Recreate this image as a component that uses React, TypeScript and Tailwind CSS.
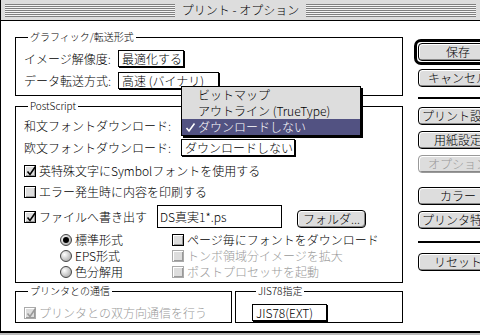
import React from 'react';

const stripes =
  'flex-1 h-[13px] bg-[repeating-linear-gradient(to_bottom,#808080_0px,#808080_1px,#f4f4f4_1px,#f4f4f4_2px)]';

function Btn({ label, disabled = false }: { label: string; disabled?: boolean }) {
  return (
    <div
      className={`flex h-[18px] w-[80px] shrink-0 items-center justify-center whitespace-nowrap rounded-[4px] border bg-[#dddddd] text-[12px] leading-none shadow-[inset_1px_1px_0_#fff,inset_-1px_-1px_0_#888] ${
        disabled ? 'border-[#999] text-[#999]' : 'border-black text-black'
      }`}
    >
      {label}
    </div>
  );
}

function Check({ checked = false, disabled = false }: { checked?: boolean; disabled?: boolean }) {
  return (
    <span
      className={`relative flex h-[12px] w-[12px] shrink-0 items-center justify-center border bg-[#dddddd] shadow-[inset_1px_1px_0_#fff,inset_-1px_-1px_0_#999] ${
        disabled ? 'border-[#aaa]' : 'border-black'
      }`}
    >
      {checked && (
        <svg width="12" height="12" viewBox="0 0 12 12" className="absolute left-[0px] top-[-1px]">
          <path
            d="M2.5 6.5 L5 9.5 L10.5 1.5"
            fill="none"
            stroke={disabled ? '#999' : '#000'}
            strokeWidth="1.6"
          />
        </svg>
      )}
    </span>
  );
}

function Radio({ on = false }: { on?: boolean }) {
  return (
    <span className="flex h-[12px] w-[12px] shrink-0 items-center justify-center rounded-full border border-[#444] bg-[radial-gradient(circle_at_35%_35%,#ffffff,#9a9a9a)]">
      {on && <span className="h-[6px] w-[6px] rounded-full bg-black" />}
    </span>
  );
}

function Popup({ label, w }: { label: string; w: string }) {
  return (
    <div
      className={`flex h-[17px] ${w} shrink-0 items-center whitespace-nowrap border border-black bg-white px-[3px] text-[12px] leading-none shadow-[1px_1px_0_#000]`}
    >
      {label}
    </div>
  );
}

function Group({
  title,
  className,
  children,
}: {
  title: string;
  className: string;
  children: React.ReactNode;
}) {
  return (
    <fieldset className={`border border-black ${className}`}>
      <legend className="ml-[4px] px-[2px] text-[10px] leading-[12px]">{title}</legend>
      {children}
    </fieldset>
  );
}

export default function App() {
  return (
    <div className="h-[335px] w-[480px] overflow-hidden bg-[#bbbbbb] font-['Noto_Sans_CJK_JP',sans-serif] font-light text-black">
      <div className="flex h-[333px] flex-col border-b-2 border-l border-black bg-white">
        {/* Title bar */}
        <div className="flex h-[21px] shrink-0 items-center border-b border-black bg-[#dddddd] px-[4px]">
          <div className={stripes} />
          <span className="px-[7px] text-[12px] leading-none whitespace-nowrap">
            プリント - オプション
          </span>
          <div className={stripes} />
        </div>

        <div className="flex">
          {/* Left column */}
          <div className="flex w-[402px] shrink-0 flex-col pl-[14px] pt-[10px]">
            <Group title="グラフィック/転送形式" className="w-[388px] px-[8px] pb-[5px] pt-[7px]">
              <div className="flex h-[18px] items-start">
                <span className="w-[94px] text-[12px] leading-[17px]">イメージ解像度:</span>
                <Popup label="最適化する" w="w-[66px]" />
              </div>
              <div className="mt-[4px] flex h-[18px] items-start">
                <span className="w-[94px] text-[12px] leading-[17px]">データ転送方式:</span>
                <Popup label="高速 (バイナリ)" w="w-[101px]" />
              </div>
            </Group>

            <Group title="PostScript" className="mt-[4px] w-[388px] px-[8px] pb-[2px] pt-[5px]">
              <div className="flex h-[18px] items-start">
                <span className="w-[157px] text-[12px] leading-[17px]">和文フォントダウンロード:</span>
                <div className="relative h-[17px] w-[114px]">
                  {/* open popup menu, drawn over its popup */}
                  <div className="absolute left-0 top-[-31px] z-10 w-[180px] border border-black bg-[#dddddd] shadow-[2px_2px_0_#000]">
                    <div className="flex h-[16px] items-center pl-[16px] text-[12px] leading-none">
                      ビットマップ
                    </div>
                    <div className="flex h-[16px] items-center pl-[16px] text-[12px] leading-none">
                      アウトライン (TrueType)
                    </div>
                    <div className="flex h-[16px] items-center bg-[#525282] text-[12px] leading-none text-white">
                      <span className="flex w-[16px] justify-center">
                        <svg width="11" height="11" viewBox="0 0 11 11">
                          <path d="M1.5 6 L4 9 L9.5 1.5" fill="none" stroke="#fff" strokeWidth="1.6" />
                        </svg>
                      </span>
                      ダウンロードしない
                    </div>
                  </div>
                </div>
              </div>
              <div className="mt-[4px] flex h-[18px] items-start">
                <span className="w-[157px] text-[12px] leading-[17px]">欧文フォントダウンロード:</span>
                <Popup label="ダウンロードしない" w="w-[114px]" />
              </div>
              <div className="mt-[4px] flex h-[20px] items-center gap-[3px] text-[12px] leading-none">
                <Check checked />
                英特殊文字にSymbolフォントを使用する
              </div>
              <div className="mt-[1px] flex h-[20px] items-center gap-[3px] text-[12px] leading-none">
                <Check />
                エラー発生時に内容を印刷する
              </div>
              <div className="mt-[3px] flex h-[23px] items-start">
                <div className="flex h-[23px] w-[133px] items-center gap-[3px] text-[12px] leading-none">
                  <Check checked />
                  ファイルへ書き出す
                </div>
                <div className="flex h-[23px] w-[125px] items-center border border-black px-[2px] text-[12px] leading-none">
                  DS真実1*.ps
                </div>
                <div className="ml-[15px] mt-[5px] flex h-[18px] w-[69px] items-center justify-center rounded-[4px] border border-black bg-[#dddddd] text-[12px] leading-none shadow-[inset_1px_1px_0_#fff,inset_-1px_-1px_0_#888]">
                  フォルダ...
                </div>
              </div>
              <div className="mt-[4px] grid grid-cols-[112px_1fr] pl-[36px] text-[12px] leading-none">
                <div className="flex h-[16px] items-center gap-[3px]">
                  <Radio on />
                  標準形式
                </div>
                <div className="flex h-[16px] items-center gap-[3px]">
                  <Check />
                  ページ毎にフォントをダウンロード
                </div>
                <div className="flex h-[16px] items-center gap-[3px]">
                  <Radio />
                  EPS形式
                </div>
                <div className="flex h-[16px] items-center gap-[3px] text-[#999]">
                  <Check disabled />
                  トンボ領域分イメージを拡大
                </div>
                <div className="flex h-[16px] items-center gap-[3px]">
                  <Radio />
                  色分解用
                </div>
                <div className="flex h-[16px] items-center gap-[3px] text-[#999]">
                  <Check disabled />
                  ポストプロセッサを起動
                </div>
              </div>
            </Group>

            <div className="mt-[2px] flex gap-[3px]">
              <Group title="プリンタとの通信" className="w-[217px] px-[8px] pb-[1px] pt-[7px]">
                <div className="flex h-[17px] items-center gap-[3px] text-[12px] leading-none text-[#999]">
                  <Check checked disabled />
                  プリンタとの双方向通信を行う
                </div>
              </Group>
              <Group title="JIS78指定" className="w-[168px] pb-[1px] pl-[16px] pt-[7px]">
                <Popup label="JIS78(EXT)" w="w-[75px]" />
              </Group>
            </div>
          </div>

          {/* Right buttons */}
          <div className="ml-[15px] flex flex-col pt-[18px]">
            <div className="-ml-[4px] w-fit rounded-[7px] border-[3px] border-black p-[1px]">
              <Btn label="保存" />
            </div>
            <div className="mt-[4px]">
              <Btn label="キャンセル" />
            </div>
            <div className="mt-[10px] h-[2px] w-[80px] bg-black" />
            <div className="mt-[8px]">
              <Btn label="プリント設定" />
            </div>
            <div className="mt-[6px]">
              <Btn label="用紙設定" />
            </div>
            <div className="mt-[6px]">
              <Btn label="オプション" disabled />
            </div>
            <div className="mt-[14px]">
              <Btn label="カラー" />
            </div>
            <div className="mt-[6px]">
              <Btn label="プリンタ特性" />
            </div>
            <div className="mt-[12px] h-[2px] w-[80px] bg-black" />
            <div className="mt-[10px]">
              <Btn label="リセット" />
            </div>
          </div>
        </div>
      </div>
    </div>
  );
}
